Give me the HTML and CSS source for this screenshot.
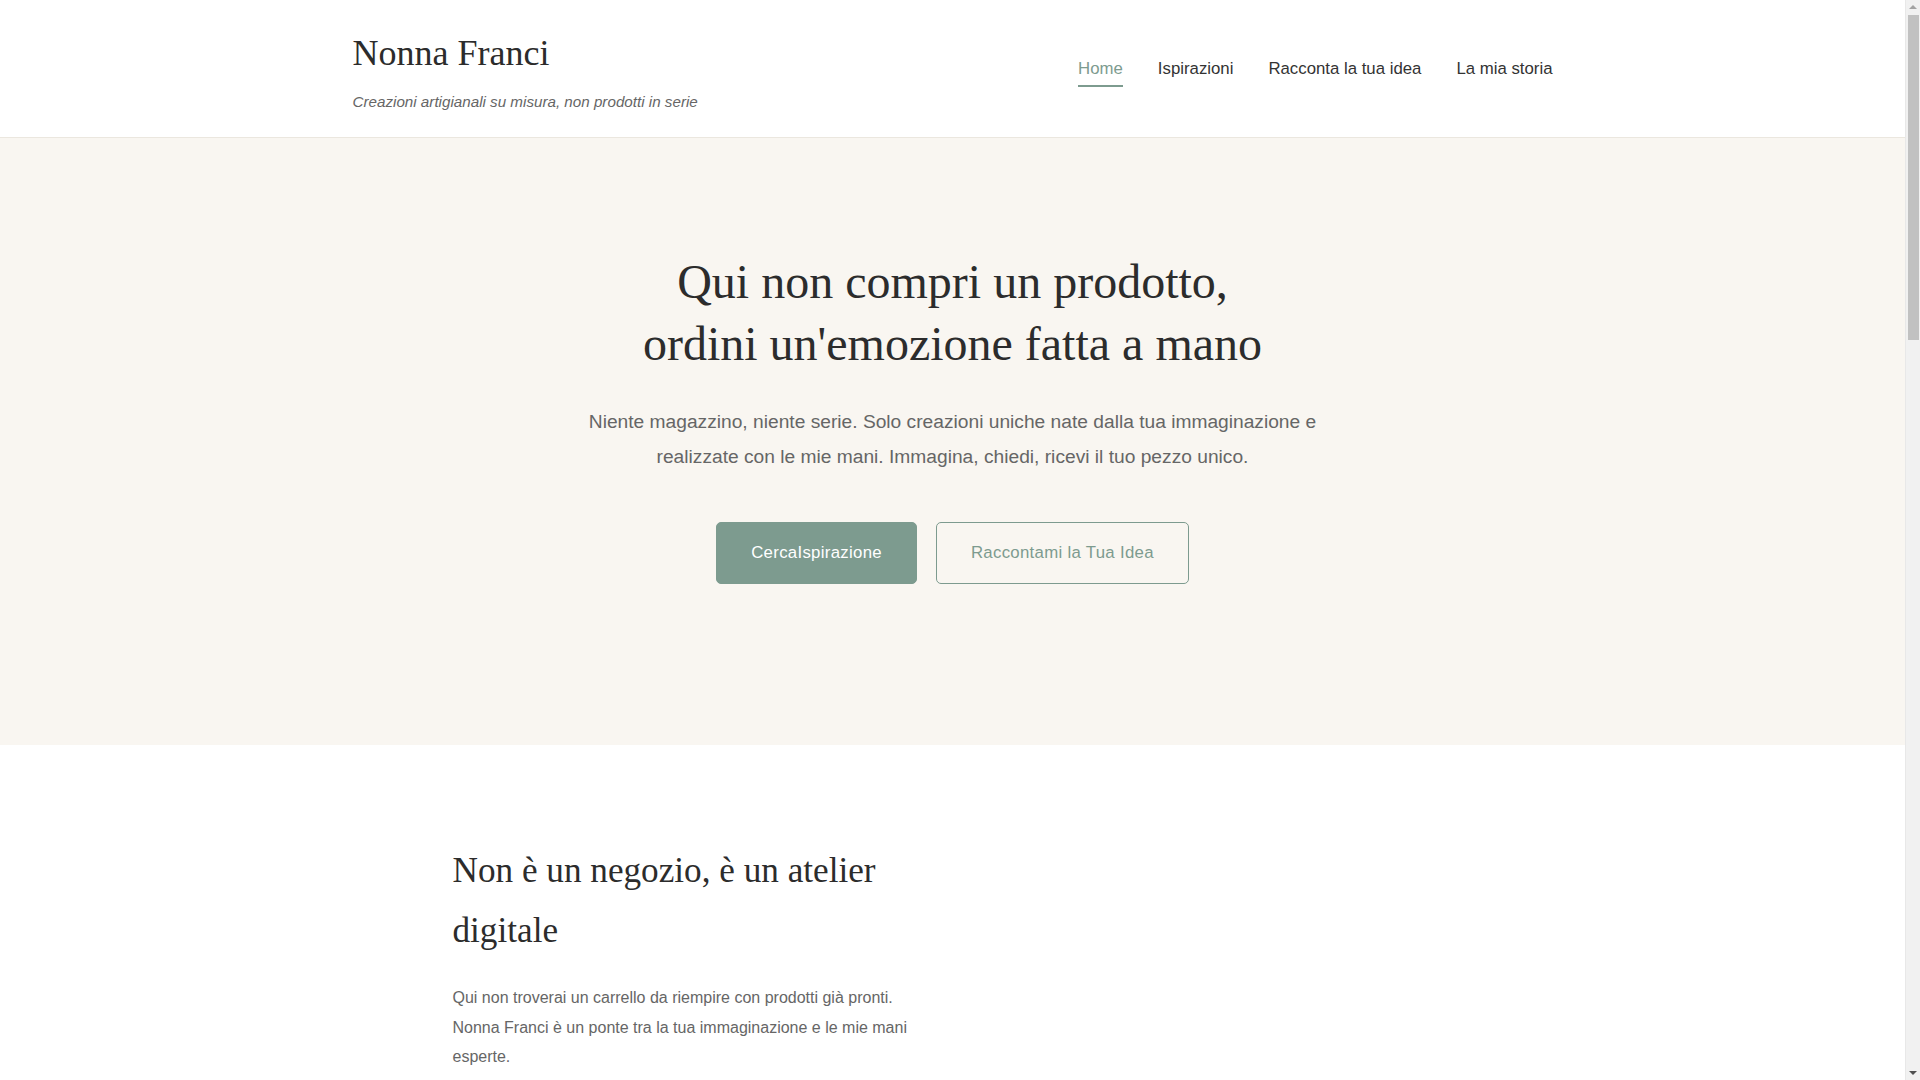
FILE: index.html
```html
<!DOCTYPE html>
<html lang="it">
<head>
<meta charset="utf-8">
<title>Nonna Franci</title>
<link rel="stylesheet" href="styles.css">
</head>
<body>
<div class="page">
  <header class="site-header">
    <div class="container header-inner">
      <div class="brand">
        <h1 class="brand-title">Nonna Franci</h1>
        <p class="brand-tagline">Creazioni artigianali su misura, non prodotti in serie</p>
      </div>
      <nav class="main-nav">
        <a class="nav-link active" href="#">Home</a>
        <a class="nav-link" href="#">Ispirazioni</a>
        <a class="nav-link" href="#">Racconta la tua idea</a>
        <a class="nav-link" href="#">La mia storia</a>
      </nav>
    </div>
  </header>

  <section class="hero">
    <h2 class="hero-title">Qui non compri un prodotto,<br>ordini un'emozione fatta a mano</h2>
    <p class="hero-text">Niente magazzino, niente serie. Solo creazioni uniche nate dalla tua immaginazione e realizzate con le mie mani. Immagina, chiedi, ricevi il tuo pezzo unico.</p>
    <div class="hero-actions">
      <a class="btn btn-primary" href="#">CercaIspirazione</a>
      <a class="btn btn-outline" href="#">Raccontami la Tua Idea</a>
    </div>
  </section>

  <section class="about">
    <div class="about-grid">
      <div class="about-text">
        <h2 class="about-title">Non è un negozio, è un atelier digitale</h2>
        <p class="about-para">Qui non troverai un carrello da riempire con prodotti già pronti. Nonna Franci è un ponte tra la tua immaginazione e le mie mani esperte.</p>
        <p class="about-para">Ogni creazione nasce da una conversazione, da un'idea condivisa, da un desiderio che prende forma punto dopo punto.</p>
      </div>
      <div class="about-media"></div>
    </div>
  </section>
</div>

<div class="scrollbar" aria-hidden="true">
  <span class="scroll-arrow up"></span>
  <span class="scroll-thumb"></span>
  <span class="scroll-arrow down"></span>
</div>
</body>
</html>
```

FILE: styles.css
```css
* { box-sizing: border-box; }

html, body {
  margin: 0;
  padding: 0;
}

body {
  font-family: "Liberation Sans", Arial, sans-serif;
  color: #2c2c2c;
  background: #ffffff;
  line-height: 1.7;
}

a { text-decoration: none; }

.page {
  width: calc(100% - 15px);
}

.container {
  max-width: 1200px;
  margin: 0 auto;
}

/* Header */
.site-header {
  background: #ffffff;
  border-bottom: 1px solid #ebe7df;
}

.header-inner {
  display: flex;
  justify-content: space-between;
  align-items: center;
  padding: 23px 0 22px;
}

.brand-title {
  margin: 0;
  font-family: "Liberation Serif", "Times New Roman", serif;
  font-weight: normal;
  font-size: 36px;
  line-height: 1.7;
  color: #2c2c2c;
}

.brand-tagline {
  margin: 5px 0 0;
  font-size: 15.2px;
  font-style: italic;
  color: #666666;
  line-height: 1.7;
}

.main-nav {
  display: flex;
  gap: 35px;
}

.nav-link {
  font-size: 16.8px;
  color: #333333;
  padding: 4px 0 1px;
  border-bottom: 2px solid transparent;
}

.nav-link.active {
  color: #7d9b8f;
  border-bottom-color: #7d9b8f;
}

/* Hero */
.hero {
  background: #f9f6f1;
  text-align: center;
  padding: 113px 20px 161px;
}

.hero-title {
  margin: 0 0 28px;
  font-family: "Liberation Serif", "Times New Roman", serif;
  font-weight: normal;
  font-size: 48px;
  line-height: 1.3;
  color: #2c2c2c;
}

.hero-text {
  max-width: 760px;
  margin: 0 auto 47px;
  font-size: 19.2px;
  line-height: 1.85;
  color: #666666;
}

.hero-actions {
  display: flex;
  justify-content: center;
  gap: 19px;
}

.btn {
  display: inline-block;
  font-size: 16.8px;
  letter-spacing: 0.3px;
  line-height: 1.7;
  padding: 16px 34px;
  border-radius: 5px;
  border: 1px solid #7d9b8f;
}

.btn-primary {
  background: #7d9b8f;
  color: #ffffff;
}

.btn-outline {
  background: transparent;
  color: #7d9b8f;
}

/* About */
.about {
  padding: 96px 20px;
}

.about-grid {
  max-width: 1000px;
  margin: 0 auto;
  display: grid;
  grid-template-columns: 1fr 1fr;
  gap: 48px;
}

.about-title {
  margin: 0 0 22px;
  font-family: "Liberation Serif", "Times New Roman", serif;
  font-weight: normal;
  font-size: 35.2px;
  line-height: 1.7;
  color: #2c2c2c;
}

.about-para {
  margin: 0 0 20px;
  font-size: 16px;
  line-height: 1.85;
  color: #666666;
}

/* Imitation of the classic browser scrollbar seen in the reference */
.scrollbar {
  position: fixed;
  top: 0;
  right: 0;
  width: 15px;
  height: 100vh;
  background: #f1f1f1;
  border-left: 1px solid #e8e8e8;
  display: flex;
  flex-direction: column;
  align-items: center;
}

.scroll-arrow {
  width: 0;
  height: 0;
  border-left: 4px solid transparent;
  border-right: 4px solid transparent;
}

.scroll-arrow.up {
  margin-top: 5px;
  border-bottom: 4px solid #a3a3a3;
}

.scroll-arrow.down {
  margin-top: auto;
  margin-bottom: 5px;
  border-top: 4px solid #505050;
}

.scroll-thumb {
  margin-top: 6px;
  width: 11px;
  height: 325px;
  background: #c1c1c1;
}
```
